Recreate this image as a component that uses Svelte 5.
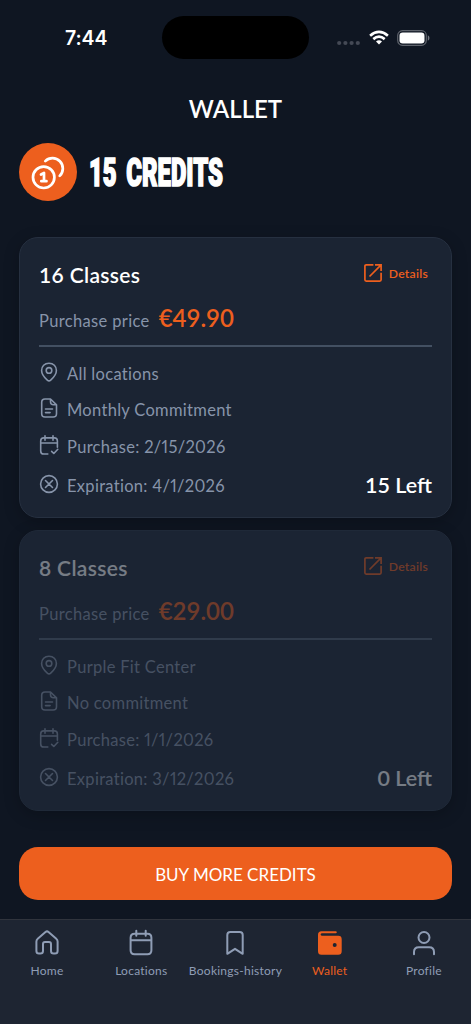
<script>
    const passes = [
        {
            id: 1,
            name: '16 Classes',
            price: '€49.90',
            location: 'All locations',
            commitment: 'Monthly Commitment',
            purchase: '2/15/2026',
            expiration: '4/1/2026',
            left: 15
        },
        {
            id: 2,
            name: '8 Classes',
            price: '€29.00',
            location: 'Purple Fit Center',
            commitment: 'No commitment',
            purchase: '1/1/2026',
            expiration: '3/12/2026',
            left: 0
        }
    ];

    const tabs = [
        { label: 'Home', icon: 'M3.4 12.6c0-1.6.5-2.3 1.6-3.2L12.5 3q1.5-1.2 3 0L23 9.4c1.1.9 1.6 1.6 1.6 3.2V22q0 2.6-2.6 2.6h-1.4q-2.6 0-2.6-2.6v-6.9q0-2-2-2h-4q-2 0-2 2V22q0 2.6-2.6 2.6H6Q3.4 24.6 3.4 22Z' },
        { label: 'Locations', icon: 'M7.6 4.7h12.8q4 0 4 4v12.6q0 4-4 4H7.6q-4 0-4-4V8.7q0-4 4-4ZM3.6 11.3h20.8M9.3 1.8v5M18.7 1.8v5' },
        { label: 'Bookings-history', icon: 'M6.3 24.8V6q0-3 3-3h9.400q3 0 3 3v18.800l-7.700-5Z' },
        { label: 'Wallet', icon: null },
        { label: 'Profile', icon: 'M14 3a5.500 5.500 0 1 1 0 11a5.500 5.500 0 0 1 0-11ZM4 25.200V23q0-4.800 4.800-4.800h10.400q4.800 0 4.800 4.800v2.200' }
    ];

    let active = $state('Wallet');

    const getRows = (pass) => [
        { text: pass.location, icon: 'M11 2.200c4.400 0 7.400 3.100 7.400 7.300 0 4.300-3.200 7.400-5.700 9.700q-1.700 1.500-3.400 0c-2.500-2.300-5.700-5.400-5.700-9.700 0-4.200 3-7.300 7.400-7.300ZM11 6.600a2.800 2.800 0 1 1 0 5.600a2.800 2.800 0 0 1 0-5.600Z' },
        { text: pass.commitment, icon: 'M12.500 2H7Q3.700 2 3.700 5.300v11.400Q3.700 20 7 20h8.200q3.300 0 3.300-3.300V7.800ZM12.500 2v2.800q0 3 3 3h3M7.500 12h7M7.500 15.600h4.600' },
        { text: `Purchase: ${pass.purchase}`, icon: 'M9.800 20H5.800Q2.700 20 2.700 16.900V7Q2.700 3.900 5.800 3.900h10.500q3.100 0 3.100 3.100v6.300M2.700 9h16.700M7 1.700v4.500M15 1.700v4.500M13.600 17.400l2.200 2.100 4-4.200' },
        { text: `Expiration: ${pass.expiration}`, icon: 'M11 2.600a8.400 8.400 0 1 1 0 16.800a8.400 8.400 0 0 1 0-16.800ZM7.500 7.500l7 7M14.500 7.500l-7 7' }
    ];
</script>

<div class="screen">
    <div class="status-bar">
        <span class="time">7:44</span>
        <div class="island"></div>
        <div class="indicators">
            <svg width="24" height="6" viewBox="0 0 24 6" class="dots">
                <circle cx="2.2" cy="3" r="2.1" />
                <circle cx="8.4" cy="3" r="2.1" />
                <circle cx="14.6" cy="3" r="2.1" />
                <circle cx="20.8" cy="3" r="2.1" />
            </svg>
            <svg width="20" height="15" viewBox="0 0 20 15" fill="none" stroke="white" stroke-width="2.7">
                <path d="M1.1 5.7Q10-1.8 18.9 5.7" />
                <path d="M4.3 9.1Q10 4.3 15.7 9.1" />
                <path d="M7 11.5Q10 9 13 11.5L10 14.6Z" fill="white" stroke="none" />
            </svg>
            <svg width="33" height="16" viewBox="0 0 33 16">
                <rect x=".7" y=".7" width="28.6" height="14.6" rx="4.7" fill="none" stroke="#5d626b" stroke-width="1.2" />
                <rect x="2.5" y="2.5" width="25" height="11" rx="3.2" fill="white" />
                <path d="M30.800 5.300q1.700.7 1.700 2.700t-1.700 2.700Z" fill="#747881" />
            </svg>
        </div>
    </div>

    <h1 class="page-title">WALLET</h1>

    <div class="credits">
        <div class="coin">
            <svg width="58" height="58" viewBox="0 0 58 58" fill="none" stroke="white" stroke-width="2.7" stroke-linecap="round" stroke-linejoin="round">
                <circle cx="24.7" cy="34.3" r="10.7" />
                <path d="M26.3 18.1a10.300 10.300 0 1 1 14.400 14.800" />
                <path d="M22 31.500l3-1.600v8.200M22.300 38.200h5.200" />
            </svg>
        </div>
        <svg class="credit-count" width="240" height="56" viewBox="0 0 240 56">
            <text x="0" y="41.7" textLength="134" lengthAdjust="spacingAndGlyphs">15 CREDITS</text>
        </svg>
    </div>

    <div class="passes">
        {#each passes as pass (pass.id)}
            <section class="card" class:used={pass.left === 0}>
                <div class="card-head">
                    <h2 class="card-name">{pass.name}</h2>
                    <div class="details">
                        <svg width="20" height="20" viewBox="0 0 20 20" fill="none" stroke="currentColor" stroke-width="1.7">
                            <path d="M10.400 1.900H3.200q-1.300 0-1.300 1.300v13.600q0 1.300 1.300 1.300h13.600q1.300 0 1.300-1.300V9.800M6.500 13.500L17.600 2.400M12 1.900h6.100V8" />
                        </svg>
                        <span>Details</span>
                    </div>
                </div>
                <div class="price-row">
                    <span class="price-label">Purchase price</span>
                    <span class="price">{pass.price}</span>
                </div>
                <div class="rows">
                    {#each getRows(pass) as row}
                        <div class="row">
                            <svg width="22" height="22" viewBox="0 0 22 22" fill="none" stroke="currentColor" stroke-width="1.6" stroke-linecap="round" stroke-linejoin="round">
                                <path d={row.icon} />
                            </svg>
                            <span class="row-text">{row.text}</span>
                        </div>
                    {/each}
                    <span class="left">{pass.left} Left</span>
                </div>
            </section>
        {/each}
    </div>

    <button class="buy">BUY MORE CREDITS</button>

    <nav class="tab-bar">
        {#each tabs as tab (tab.label)}
            <button class="tab" class:active={active === tab.label} onclick={() => (active = tab.label)}>
                <svg width="28" height="28" viewBox="0 0 28 28" fill="none" stroke="currentColor" stroke-width="2" stroke-linecap="round" stroke-linejoin="round">
                    {#if tab.icon}
                        <path d={tab.icon} />
                    {:else}
                        <path fill="currentColor" stroke="none" fill-rule="evenodd" d="M5.500 2.200h14.200q1.100 0 1.100 1t-1.100 1H6.300q-1.700 0-1.700 1.300T6.300 6.800h16q3.400 0 3.400 3.400v12q0 3.500-3.500 3.500H5.500Q2 25.700 2 22.200V5.700Q2 2.200 5.500 2.200ZM18.700 14a2 2 0 1 0 0 4a2 2 0 0 0 0-4Z" />
                    {/if}
                </svg>
                <span>{tab.label}</span>
            </button>
        {/each}
    </nav>
</div>

<style>
    :global(body) {
        margin: 0;
        background: #0f1622;
    }

    .screen {
        box-sizing: border-box;
        width: 471px;
        height: 1024px;
        display: flex;
        flex-direction: column;
        overflow: hidden;
        background: #0f1622;
        color: #fff;
        font-family: Lato, sans-serif;
    }

    .status-bar {
        display: grid;
        grid-template-columns: 162px 147px 162px;
        align-items: center;
        height: 43px;
        padding-top: 16px;
    }

    .time {
        padding: 1px 0 0 65px;
        font-family: Inter, sans-serif;
        font-size: 19.5px;
        font-weight: 600;
        letter-spacing: -.1px;
    }

    .island {
        height: 43px;
        border-radius: 22px;
        background: #000;
    }

    .indicators {
        display: flex;
        align-items: center;
        padding-left: 28px;
        gap: 8px;
    }

    .dots {
        fill: #444955;
        margin-top: 11px;
    }

    .page-title {
        margin: 35px 0 0;
        text-align: center;
        font-size: 24px;
        line-height: 30px;
        font-weight: 600;
    }

    .credits {
        display: flex;
        align-items: center;
        gap: 12px;
        margin: 19px 19px 0;
    }

    .coin {
        width: 58px;
        height: 58px;
        border-radius: 50%;
        background: #ed5f1e;
    }

    .credit-count {
        overflow: visible;
    }

    .credit-count text {
        font-family: Roboto, sans-serif;
        font-size: 38px;
        font-weight: 900;
        word-spacing: 6px;
        fill: #fff;
        stroke: #fff;
        stroke-width: 1.7px;
    }

    .passes {
        display: flex;
        flex-direction: column;
        gap: 12px;
        margin: 36px 19px 0;
    }

    .card {
        box-sizing: border-box;
        height: 281px;
        padding: 24px 19px 0;
        border: 1px solid #263040;
        border-radius: 19px;
        background: #1b2433;
        box-shadow: 0 4px 16px rgba(0, 0, 0, .22);
    }

    .card.used {
        border-color: #1f2938;
    }

    .card-head {
        display: flex;
        justify-content: space-between;
        height: 26px;
    }

    .card-name {
        margin: 0;
        font-size: 21px;
        line-height: 25px;
        font-weight: 600;
        letter-spacing: .35px;
    }

    .details {
        display: flex;
        align-items: center;
        gap: 6px;
        height: 22px;
        padding-right: 4px;
        color: #ed5f1e;
        font-size: 12.2px;
        font-weight: 600;
        letter-spacing: .25px;
    }

    .price-row {
        display: flex;
        align-items: baseline;
        gap: 9px;
        box-sizing: border-box;
        height: 59px;
        padding-top: 15px;
        border-bottom: 2px solid #435062;
    }

    .price-label {
        color: #8794aa;
        font-size: 16.5px;
        letter-spacing: .35px;
    }

    .price {
        color: #ed5f1e;
        font-size: 24px;
        font-weight: 600;
    }

    .rows {
        display: grid;
        grid-template-columns: 1fr auto;
        grid-template-rows: 36.3px 36.3px 39px 37px;
        padding-top: 14px;
    }

    .row {
        grid-column: 1;
        display: flex;
        align-items: flex-start;
        gap: 7px;
        margin-left: -1px;
        color: #8794aa;
        font-size: 16.5px;
        line-height: 22px;
        letter-spacing: .3px;
        font-variant-numeric: proportional-nums;
    }

    .row-text {
        padding-top: 2px;
    }

    .left {
        grid-column: 2;
        grid-row: 4;
        font-size: 21.5px;
        line-height: 25px;
        font-weight: 600;
    }

    .used .card-name,
    .used .details,
    .used .price-row > span,
    .used .row,
    .used .left {
        opacity: .4;
    }

    .used .price-row {
        border-color: #303b4b;
    }

    .buy {
        flex-shrink: 0;
        height: 53px;
        margin: 36px 19px 19px;
        padding: 2px 0 0;
        border: 0;
        border-radius: 19px;
        background: #ed5f1e;
        color: #fff;
        font: 17px Lato, sans-serif;
    }

    .tab-bar {
        flex: 1;
        display: grid;
        grid-template-columns: repeat(5, 1fr);
        border-top: 1px solid #30343d;
        background: #1e2532;
    }

    .tab {
        display: flex;
        flex-direction: column;
        align-items: center;
        gap: 6px;
        padding: 9px 0 0;
        border: 0;
        background: none;
        color: #8f9db5;
        font: 12px/16px Lato, sans-serif;
        letter-spacing: .25px;
        white-space: nowrap;
    }

    .tab.active {
        color: #ed5f1e;
    }
</style>
